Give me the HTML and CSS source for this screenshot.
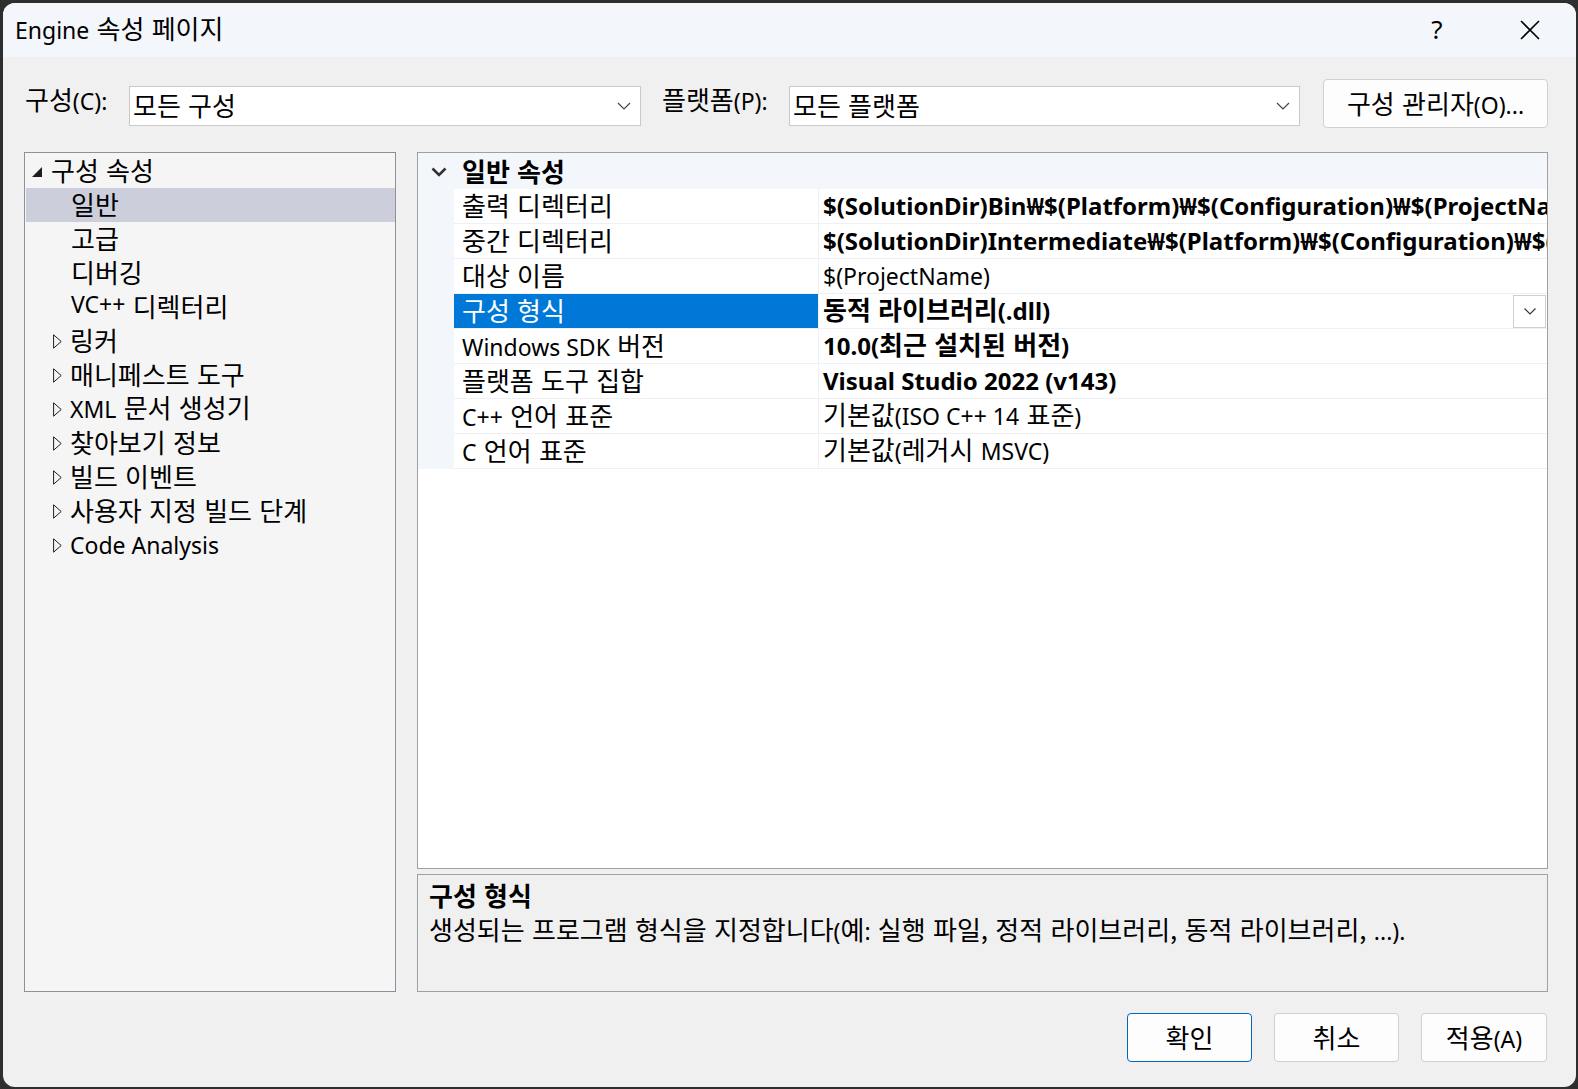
FILE: index.html
```html
<!DOCTYPE html>
<html lang="ko">
  <head>
    <meta charset="UTF-8" />
    <meta name="viewport" content="width=device-width, initial-scale=1.0" />
    <title>Engine 속성 페이지</title>
    <link rel="stylesheet" href="styles.css">
  </head>
  <body>
    <div class="window">
      <div class="titlebar">
        <div class="title"><span class="en">Engine</span> 속성 페이지</div>
        <div class="caption-btn help">?</div>
        <div class="caption-btn close">
          <svg width="20" height="20" viewBox="0 0 20 20"><path d="M1 1L19 19M19 1L1 19" stroke="#000" stroke-width="1.6" fill="none"/></svg>
        </div>
      </div>

      <div class="toolbar">
        <label class="field-label config-label">구성<span class="en">(C):</span></label>
        <div class="combo config-combo">
          <span class="combo-text">모든 구성</span>
          <svg class="combo-arrow" width="14" height="8" viewBox="0 0 14 8"><path d="M1 1l6 6 6-6" stroke="#444" stroke-width="1.2" fill="none"/></svg>
        </div>
        <label class="field-label platform-label">플랫폼<span class="en">(P):</span></label>
        <div class="combo platform-combo">
          <span class="combo-text">모든 플랫폼</span>
          <svg class="combo-arrow" width="14" height="8" viewBox="0 0 14 8"><path d="M1 1l6 6 6-6" stroke="#444" stroke-width="1.2" fill="none"/></svg>
        </div>
        <button type="button" class="button manager-button">구성 관리자<span class="en">(O)...</span></button>
      </div>

      <div class="main">
        <div class="tree">
          <div class="tree-row root">
            <span class="toggle"><svg width="10" height="10" viewBox="0 0 10 10"><path d="M10 0V10H0Z" fill="#1e1e1e"/></svg></span>
            <span>구성 속성</span>
          </div>
          <div class="tree-row leaf selected">일반</div>
          <div class="tree-row leaf">고급</div>
          <div class="tree-row leaf">디버깅</div>
          <div class="tree-row leaf"><span class="en">VC++</span>&nbsp;디렉터리</div>
          <div class="tree-row branch">
            <span class="toggle"><svg width="9" height="15" viewBox="0 0 9 15"><path d="M0.6 0.8L8.2 7.5L0.6 14.2Z" fill="none" stroke="#1e1e1e" stroke-width="1"/></svg></span>
            <span>링커</span>
          </div>
          <div class="tree-row branch">
            <span class="toggle"><svg width="9" height="15" viewBox="0 0 9 15"><path d="M0.6 0.8L8.2 7.5L0.6 14.2Z" fill="none" stroke="#1e1e1e" stroke-width="1"/></svg></span>
            <span>매니페스트 도구</span>
          </div>
          <div class="tree-row branch">
            <span class="toggle"><svg width="9" height="15" viewBox="0 0 9 15"><path d="M0.6 0.8L8.2 7.5L0.6 14.2Z" fill="none" stroke="#1e1e1e" stroke-width="1"/></svg></span>
            <span><span class="en">XML</span> 문서 생성기</span>
          </div>
          <div class="tree-row branch">
            <span class="toggle"><svg width="9" height="15" viewBox="0 0 9 15"><path d="M0.6 0.8L8.2 7.5L0.6 14.2Z" fill="none" stroke="#1e1e1e" stroke-width="1"/></svg></span>
            <span>찾아보기 정보</span>
          </div>
          <div class="tree-row branch">
            <span class="toggle"><svg width="9" height="15" viewBox="0 0 9 15"><path d="M0.6 0.8L8.2 7.5L0.6 14.2Z" fill="none" stroke="#1e1e1e" stroke-width="1"/></svg></span>
            <span>빌드 이벤트</span>
          </div>
          <div class="tree-row branch">
            <span class="toggle"><svg width="9" height="15" viewBox="0 0 9 15"><path d="M0.6 0.8L8.2 7.5L0.6 14.2Z" fill="none" stroke="#1e1e1e" stroke-width="1"/></svg></span>
            <span>사용자 지정 빌드 단계</span>
          </div>
          <div class="tree-row branch">
            <span class="toggle"><svg width="9" height="15" viewBox="0 0 9 15"><path d="M0.6 0.8L8.2 7.5L0.6 14.2Z" fill="none" stroke="#1e1e1e" stroke-width="1"/></svg></span>
            <span><span class="en">Code Analysis</span></span>
          </div>
        </div>

        <div class="right-pane">
          <div class="prop-grid">
            <div class="category">
              <svg class="category-arrow" width="16" height="10" viewBox="0 0 16 10"><path d="M1.5 1.5L8 8L14.5 1.5" stroke="#333" stroke-width="2.6" fill="none"/></svg>
              <span>일반 속성</span>
            </div>

            <div class="prop-row">
              <div class="gutter"></div>
              <div class="cells">
                <div class="prop-name">출력 디렉터리</div>
                <div class="prop-value bold"><span><span class="en">$(SolutionDir)Bin₩$(Platform)₩$(Configuration)₩$(ProjectName)₩</span></span></div>
              </div>
            </div>
            <div class="prop-row">
              <div class="gutter"></div>
              <div class="cells">
                <div class="prop-name">중간 디렉터리</div>
                <div class="prop-value bold"><span><span class="en">$(SolutionDir)Intermediate₩$(Platform)₩$(Configuration)₩$(ProjectName)₩</span></span></div>
              </div>
            </div>
            <div class="prop-row">
              <div class="gutter"></div>
              <div class="cells">
                <div class="prop-name">대상 이름</div>
                <div class="prop-value"><span><span class="en">$(ProjectName)</span></span></div>
              </div>
            </div>
            <div class="prop-row">
              <div class="gutter"></div>
              <div class="cells">
                <div class="prop-name selected">구성 형식</div>
                <div class="prop-value bold">
                  <span class="value-text">동적 라이브러리<span class="en">(.dll)</span></span>
                  <span class="drop-btn"><svg width="12" height="7" viewBox="0 0 12 7"><path d="M0.5 0.5l5.5 5.5 5.5-5.5" stroke="#333" stroke-width="1.1" fill="none"/></svg></span>
                </div>
              </div>
            </div>
            <div class="prop-row">
              <div class="gutter"></div>
              <div class="cells">
                <div class="prop-name"><span class="en">Windows SDK</span> 버전</div>
                <div class="prop-value bold"><span><span class="en">10.0(</span>최근 설치된 버전<span class="en">)</span></span></div>
              </div>
            </div>
            <div class="prop-row">
              <div class="gutter"></div>
              <div class="cells">
                <div class="prop-name">플랫폼 도구 집합</div>
                <div class="prop-value bold"><span><span class="en">Visual Studio 2022 (v143)</span></span></div>
              </div>
            </div>
            <div class="prop-row">
              <div class="gutter"></div>
              <div class="cells">
                <div class="prop-name"><span class="en">C++</span> 언어 표준</div>
                <div class="prop-value"><span>기본값<span class="en">(ISO C++ 14</span> 표준<span class="en">)</span></span></div>
              </div>
            </div>
            <div class="prop-row">
              <div class="gutter"></div>
              <div class="cells">
                <div class="prop-name"><span class="en">C</span> 언어 표준</div>
                <div class="prop-value"><span>기본값<span class="en">(</span>레거시 <span class="en">MSVC)</span></span></div>
              </div>
            </div>
          </div>

          <div class="description">
            <div class="desc-title">구성 형식</div>
            <div class="desc-text">생성되는 프로그램 형식을 지정합니다<span class="en">(</span>예<span class="en">:</span> 실행 파일, 정적 라이브러리, 동적 라이브러리, <span class="en">...).</span></div>
          </div>
        </div>
      </div>

      <div class="footer">
        <button type="button" class="button dialog-button default">확인</button>
        <button type="button" class="button dialog-button">취소</button>
        <button type="button" class="button dialog-button apply">적용<span class="en">(A)</span></button>
      </div>
    </div>
  </body>
</html>
```

FILE: styles.css
```css
body {
  margin: 0;
  padding: 3px 2px 2px 3px;
  background-color: #2e2e2e;
  font-family: "Noto Sans CJK KR", "Noto Sans", sans-serif;
  font-size: 26px;
  color: #000;
}

/* latin runs use a narrower face, closer to Segoe UI */
.en {
  font-family: "Noto Sans", sans-serif;
  font-size: 23px;
}

.bold .en {
  font-size: 24px;
}

.window {
  width: 1573px;
  height: 1084px;
  background-color: #f0f0f0;
  border-radius: 12px;
  overflow: hidden;
  display: flex;
  flex-direction: column;
  box-sizing: border-box;
}

/* title bar */
.titlebar {
  height: 54px;
  flex: none;
  background-color: #f3f6fa;
  display: flex;
  align-items: center;
}

.title {
  flex: 1;
  padding-left: 12px;
  line-height: 34px;
  padding-bottom: 3px;
}

.caption-btn {
  width: 92px;
  height: 54px;
  display: flex;
  align-items: center;
  justify-content: center;
}

.caption-btn.help {
  font-family: "Noto Sans", sans-serif;
  font-size: 26px;
  padding-bottom: 2px;
  box-sizing: border-box;
}

.caption-btn.close {
  width: 93px;
}

/* configuration row */
.toolbar {
  flex: none;
  height: 49px;
  margin-top: 22px;
  padding: 0 28px 0 21px;
  display: flex;
  align-items: flex-start;
}

.field-label {
  line-height: 34px;
  margin-top: 3px;
  box-sizing: border-box;
}

.config-label {
  width: 105px;
  padding-left: 1px;
}

.platform-label {
  width: 148px;
  padding-left: 21px;
}

.combo {
  height: 40px;
  margin-top: 7px;
  box-sizing: border-box;
  background-color: #fff;
  border: 1px solid #c9c9c9;
  display: flex;
  align-items: center;
  padding: 0 9px 0 3px;
}

.config-combo {
  width: 512px;
}

.platform-combo {
  width: 511px;
}

.combo-text {
  flex: 1;
  line-height: 34px;
  margin-top: -3px;
}

.button {
  font-family: inherit;
  font-size: 26px;
  color: #000;
  background-color: #fdfdfd;
  border: 1px solid #d0d0d0;
  border-radius: 4px;
  height: 49px;
  padding: 0 0 3px;
  box-sizing: border-box;
}

.manager-button {
  width: 225px;
  margin-left: 23px;
}

/* tree + grid */
.main {
  flex: none;
  height: 840px;
  margin-top: 24px;
  padding: 0 28px 0 21px;
  display: flex;
}

.tree {
  width: 372px;
  box-sizing: border-box;
  border: 1px solid #8d8f99;
  background-color: #f5f5f5;
  padding: 1px 0 0 1px;
}

.tree-row {
  height: 34px;
  line-height: 34px;
  display: flex;
  align-items: center;
  white-space: nowrap;
}

.tree-row > span:last-child,
.tree-row.leaf {
  padding-bottom: 3px;
}

.tree-row.root {
  padding-left: 6px;
}

.tree-row.root .toggle {
  width: 19px;
  padding-top: 2px;
}

.tree-row.leaf {
  padding-left: 45px;
  box-sizing: border-box;
}

.tree-row.branch {
  padding-left: 27px;
}

.tree-row.branch .toggle {
  width: 17px;
  padding-top: 1px;
}

.toggle {
  display: flex;
  align-items: center;
  flex: none;
}

.tree-row.selected {
  background-color: #cccedb;
}

.right-pane {
  width: 1131px;
  margin-left: 21px;
  display: flex;
  flex-direction: column;
}

.prop-grid {
  height: 717px;
  box-sizing: border-box;
  border: 1px solid #a0a0a0;
  background-color: #fff;
}

.category {
  height: 36px;
  background-color: #f3f6fb;
  display: flex;
  align-items: center;
  padding-left: 13px;
  font-weight: bold;
}

.category span {
  padding-bottom: 2px;
}

.category-arrow {
  margin-right: 15px;
  margin-top: 1px;
}

.prop-row {
  height: 35px;
  display: flex;
}

.gutter {
  width: 36px;
  flex: none;
  background-color: #f3f6fb;
}

.cells {
  flex: 1;
  min-width: 0;
  display: flex;
  border-bottom: 1px solid #eef0f4;
}

.prop-name {
  width: 365px;
  flex: none;
  padding: 0 0 3px 8px;
  line-height: 31px;
  height: 34px;
  border-right: 1px solid #eef0f4;
  box-sizing: border-box;
  white-space: nowrap;
}

.prop-name.selected {
  background-color: #0078d7;
  color: #fff;
}

.prop-value {
  flex: 1;
  min-width: 0;
  padding-left: 4px;
  line-height: 31px;
  white-space: nowrap;
  overflow: hidden;
  display: flex;
  align-items: center;
}

.prop-value > span {
  padding-bottom: 3px;
}

.prop-value.bold {
  font-weight: bold;
}

.value-text {
  flex: 1;
}

.drop-btn {
  width: 33px;
  height: 33px;
  margin-right: 1px;
  box-sizing: border-box;
  border: 1px solid #cfcfcf;
  background-color: #fff;
  display: flex;
  align-items: center;
  justify-content: center;
}

.prop-value > .drop-btn {
  padding-bottom: 0;
}

.description {
  height: 118px;
  margin-top: 5px;
  box-sizing: border-box;
  border: 1px solid #a0a0a0;
  background-color: #f0f0f0;
  padding: 3px 11px;
  line-height: 34px;
}

.desc-title {
  font-weight: bold;
}

/* dialog buttons */
.footer {
  flex: none;
  margin-top: 21px;
  padding-right: 29px;
  display: flex;
  justify-content: flex-end;
}

.dialog-button {
  width: 125px;
  margin-left: 22px;
}

.dialog-button.apply {
  width: 126px;
}

.dialog-button.default {
  border-color: #0067c0;
}
```
